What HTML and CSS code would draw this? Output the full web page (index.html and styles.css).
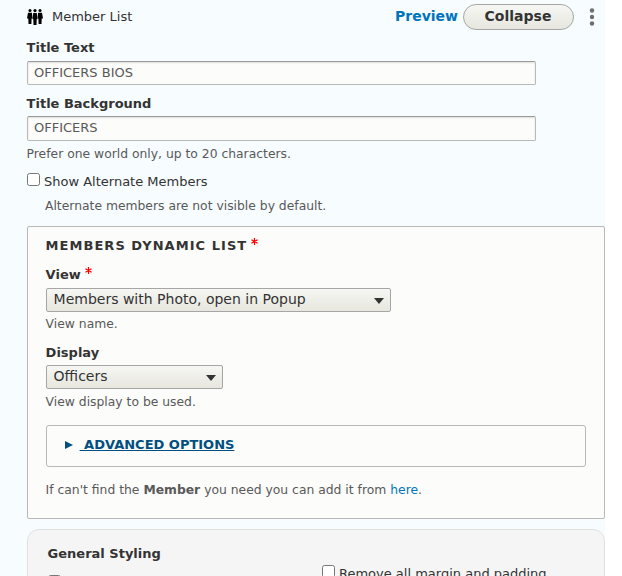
FILE: index.html
```html
<!DOCTYPE html>
<html lang="en">
<head>
<meta charset="utf-8">
<title>Member List</title>
<link rel="stylesheet" href="styles.css">
</head>
<body>
<main class="panel">
  <header class="header">
    <svg class="people" viewBox="0 0 16 16" width="16" height="16">
      <circle cx="3" cy="1.600" r="1.500"/><circle cx="13" cy="1.600" r="1.500"/><circle cx="8" cy="1.600" r="1.600"/>
      <path d="M1 3.700h3.900l.7 5.700-1 .2-.2 5.400H1.500l-.2-5.400L0 9.400zM11.100 3.700H15l1 5.700-1.300.2-.2 5.400h-2.900l-.2-5.400-1-.2z"/>
      <path d="M6.200 3.900h3.600l.6 6-.7.300L9.500 16h-3l-.2-5.800-.7-.3z"/>
    </svg>
    <span class="type">Member List</span>
    <a class="preview">Preview</a>
    <button class="collapse">Collapse</button>
    <svg class="dots" viewBox="0 0 6 18" width="6" height="18"><circle cx="3" cy="2.500" r="2.200"/><circle cx="3" cy="9" r="2.200"/><circle cx="3" cy="15.500" r="2.200"/></svg>
  </header>
  <label class="label first">Title Text</label>
  <input class="text" type="text" value="OFFICERS BIOS">
  <label class="label second">Title Background</label>
  <input class="text tall" type="text" value="OFFICERS">
  <p class="description">Prefer one world only, up to 20 characters.</p>
  <label class="check"><span class="box"></span>Show Alternate Members</label>
  <p class="description indent">Alternate members are not visible by default.</p>
  <section class="fieldset">
    <h2 class="legend">Members dynamic list<svg class="star" viewBox="0 0 8 8" width="7" height="7"><path d="M4 0v8M.5 2l7 4M.5 6l7-4"/></svg></h2>
    <label class="label view">View<svg class="star" viewBox="0 0 8 8" width="7" height="7"><path d="M4 0v8M.5 2l7 4M.5 6l7-4"/></svg></label>
    <div class="select wide"><span>Members with Photo, open in Popup</span><i class="arrow"></i></div>
    <p class="description tight">View name.</p>
    <label class="label display">Display</label>
    <div class="select"><span>Officers</span><i class="arrow"></i></div>
    <p class="description">View display to be used.</p>
    <div class="details"><i class="triangle"></i><a class="summary">&nbsp;Advanced options</a></div>
    <p class="description hint">If can't find the <strong>Member</strong> you need you can add it from <a class="link">here</a>.</p>
  </section>
  <section class="styling">
    <h3 class="heading">General Styling</h3>
    <div class="options">
      <span class="box"></span>
      <label class="check remove"><span class="box"></span>Remove all margin and padding</label>
    </div>
  </section>
</main>
</body>
</html>
```
FILE: styles.css
```css
* { box-sizing: border-box; }
body {
  margin: 0;
  height: 576px;
  overflow: hidden;
  background: #fff;
  color: #333;
  font: 13px/20px "DejaVu Sans", sans-serif;
}
.panel {
  width: 605px;
  height: 576px;
  padding-left: 26.6px;
  overflow: hidden;
  background: #f7fcff;
}
.header { display: flex; align-items: center; height: 34px; padding-right: 10px; }
.people { margin-right: 9.4px; }
.type { font-size: 13px; }
.preview { margin: 0 5px 2px auto; color: #0074bd; font-size: 14px; font-weight: 700; }
.collapse {
  width: 111px;
  height: 26px;
  padding: 0 1px 1px 0;
  border: 1px solid #a6a6a6;
  border-radius: 13px;
  background: linear-gradient(#f6f6f3, #e7e7df);
  color: #333;
  font: 700 14px/23px "DejaVu Sans", sans-serif;
}
.dots { margin-left: 15px; fill: #6e6e6e; }
.label { display: block; height: 20px; font-weight: 700; }
.first { margin: 4px 0 3px; }
.second { margin: 9px 0 2px; }
.text {
  display: block;
  width: 509px;
  height: 24px;
  padding: 0 6.4px 1px;
  border: 1px solid #b8b8b8;
  border-top-color: #999;
  border-radius: 2px;
  background: #fcfcfa;
  box-shadow: inset 0 1px 2px rgba(0, 0, 0, .12);
  color: #595959;
  font: 13px/20px "DejaVu Sans", sans-serif;
}
.tall { height: 25px; padding-bottom: 2px; }
.description { margin: 3px 0 0; color: #595959; font-size: 12.35px; }
.tight { margin-top: 2px; }
.check { display: flex; align-items: center; margin-top: 8px; }
.box {
  flex: none;
  width: 13px;
  height: 13px;
  margin: -5px 4.4px 0 0;
  border: 1px solid #767676;
  border-radius: 2.5px;
  background: #fff;
}
.indent { margin: 4px 0 0 18.4px; }
.fieldset {
  width: 578px;
  height: 293px;
  margin-top: 10px;
  padding: 9px 18px 0;
  border: 1px solid #b8b8b8;
  border-radius: 2px;
  background: #fcfcfa;
}
.legend { height: 20px; margin: 0; font-size: 13px; line-height: 20px; letter-spacing: 1.04px; text-transform: uppercase; }
.star { position: relative; top: -5px; margin-left: 4px; fill: none; stroke: #f00; stroke-width: 1.4; }
.view { margin: 9px 0 3px; }
.select {
  display: flex;
  align-items: center;
  justify-content: space-between;
  width: 177px;
  height: 24px;
  padding: 0 6px 2px 7px;
  border: 1px solid #a6a6a6;
  border-radius: 2px;
  background: linear-gradient(#f6f6f3, #e7e7df);
  font-size: 14px;
}
.wide { width: 345px; }
.arrow { margin-top: 4px; border: 5px solid transparent; border-top: 6px solid #333; border-bottom: 0; }
.display { margin: 9px 0 2px; }
.details {
  display: flex;
  align-items: center;
  width: 540px;
  height: 42px;
  margin-top: 13px;
  padding: 0 0 3px 18px;
  border: 1px solid #b8b8b8;
  border-radius: 3px;
}
.triangle { margin-right: 7px; border: 4px solid transparent; border-left: 8px solid #004f80; border-right: 0; }
.summary { color: #004f80; font-weight: 700; text-decoration: underline; text-transform: uppercase; }
.hint { margin-top: 13px; }
.link { color: #0074bd; }
.styling {
  width: 578px;
  height: 80px;
  margin-top: 10px;
  padding: 14px 20px;
  border: 1px solid #e0e0e0;
  border-radius: 12px;
  background: #f5f5f5;
}
.heading { margin: 0; font-size: 13px; line-height: 20px; }
.options { display: grid; grid-template-columns: 274px 1fr; align-items: start; }
.options > .box { margin-top: 11px; }
.remove { height: 20px; margin-top: 0; }
.remove .box { margin-top: -5px; }
```
